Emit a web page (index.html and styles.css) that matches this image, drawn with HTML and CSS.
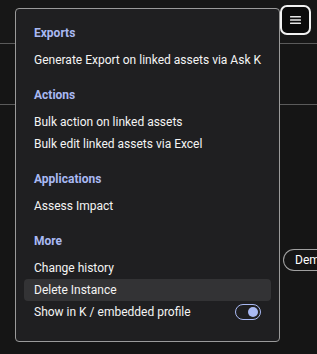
FILE: index.html
```html
<!DOCTYPE html>
<html lang="en">
<head>
  <meta charset="UTF-8">
  <meta name="viewport" content="width=device-width, initial-scale=1.0">
  <title>Instance menu</title>
  <link rel="stylesheet" href="styles.css">
</head>
<body>
  <header class="topbar">
    <button class="menu-btn" aria-label="Menu">
      <svg width="11" height="8" viewBox="0 0 11 8">
        <rect x="0" y="0" width="11" height="1.6" rx="0.5" fill="#e6e6e6"/>
        <rect x="0" y="3.2" width="11" height="1.6" rx="0.5" fill="#e6e6e6"/>
        <rect x="0" y="6.4" width="11" height="1.6" rx="0.5" fill="#e6e6e6"/>
      </svg>
    </button>
  </header>
  <div class="subbar"></div>
  <div class="content">
    <span class="pill">Demo</span>
  </div>

  <div class="dropdown">
    <div class="section">
      <div class="section-title">Exports</div>
      <div class="item">Generate Export on linked assets via Ask K</div>
    </div>
    <div class="section">
      <div class="section-title">Actions</div>
      <div class="item">Bulk action on linked assets</div>
      <div class="item">Bulk edit linked assets via Excel</div>
    </div>
    <div class="section">
      <div class="section-title">Applications</div>
      <div class="item">Assess Impact</div>
    </div>
    <div class="section">
      <div class="section-title">More</div>
      <div class="item">Change history</div>
      <div class="item active">Delete Instance</div>
      <div class="item toggle-row">
        <span>Show in K / embedded profile</span>
        <span class="toggle"><span class="knob"></span></span>
      </div>
    </div>
  </div>
</body>
</html>
```

FILE: styles.css
```css
* {
  margin: 0;
  padding: 0;
  box-sizing: border-box;
  font-family: 'Roboto', 'Liberation Sans', sans-serif;
}

body {
  background: #151515;
  color: #fff;
  width: 317px;
  height: 354px;
  overflow: hidden;
  position: relative;
}

.topbar {
  height: 44px;
  border-bottom: 1px solid #5a5a5a;
  background: #171717;
  display: flex;
  justify-content: flex-end;
  align-items: flex-start;
  padding: 5px 6px 0 0;
}

.menu-btn {
  width: 31px;
  height: 30px;
  border: 2px solid #f2f2f2;
  border-radius: 7px;
  background: #0b0b0b;
  display: flex;
  align-items: center;
  justify-content: center;
}

.menu-btn svg {
  display: block;
}

.subbar {
  height: 61px;
  border-bottom: 1px solid #5a5a5a;
  background: #151515;
}

.content {
  display: flex;
  justify-content: flex-end;
  padding-top: 144px;
}

.pill {
  display: inline-flex;
  align-items: center;
  flex: 0 0 auto;
  width: 34px;
  height: 22px;
  border: 1px solid #a0a0a0;
  border-right: none;
  border-radius: 11px 0 0 11px;
  padding-left: 11px;
  font-size: 12px;
  color: #fff;
  white-space: nowrap;
  overflow: hidden;
}

.dropdown {
  position: absolute;
  left: 15px;
  top: 8px;
  width: 265px;
  height: 334px;
  background: #1f1f21;
  border: 1px solid #9a9a9a;
  border-radius: 4px;
  padding: 0 8px;
  z-index: 10;
}

.section {
  padding-top: 13px;
}

.section-title {
  height: 22px;
  line-height: 22px;
  padding-left: 10px;
  margin-bottom: 5px;
  font-size: 12px;
  font-weight: bold;
  color: #a9b9f3;
}

.item {
  height: 22px;
  line-height: 22px;
  padding: 0 10px;
  font-size: 12px;
  color: #f4f4f4;
  border-radius: 4px;
}

.item.active {
  background: #333335;
}

.toggle-row {
  display: flex;
  justify-content: space-between;
  align-items: center;
}

.toggle {
  width: 26px;
  height: 16px;
  border: 1.5px solid #a9b9f3;
  border-radius: 8px;
  display: flex;
  align-items: center;
  justify-content: flex-end;
  padding-right: 2px;
}

.knob {
  width: 10px;
  height: 10px;
  border-radius: 50%;
  background: #a9b9f3;
}
```
